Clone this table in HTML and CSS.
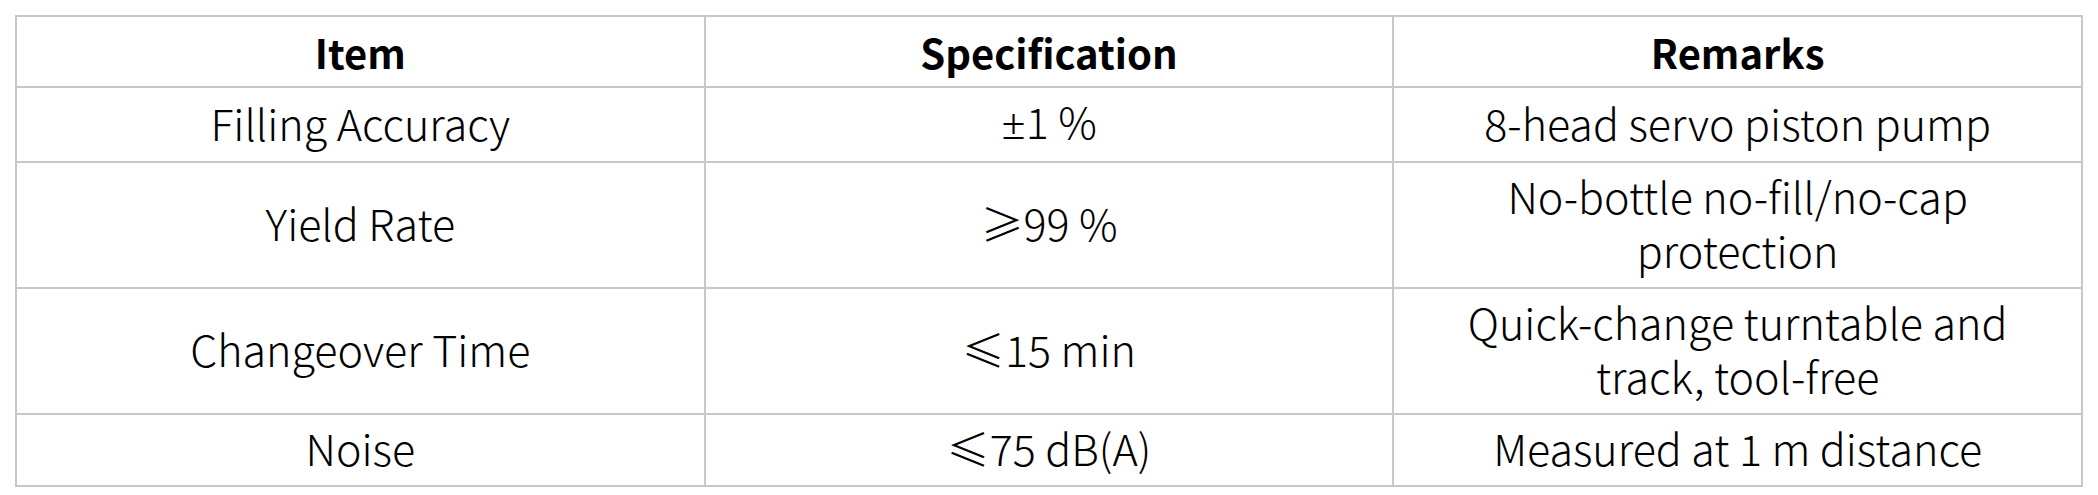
FILE: index.html
```html
<!DOCTYPE html>
<html lang="en">
<head>
<meta charset="utf-8">
<title>Specifications</title>
<link rel="stylesheet" href="styles.css">
</head>
<body>
<table class="spec-table">
  <thead>
    <tr>
      <th>Item</th>
      <th>Specification</th>
      <th>Remarks</th>
    </tr>
  </thead>
  <tbody>
    <tr>
      <td>Filling Accuracy</td>
      <td><span class="latin">±</span>1 %</td>
      <td>8-head servo piston pump</td>
    </tr>
    <tr>
      <td>Yield Rate</td>
      <td>≥99 %</td>
      <td>No-bottle no-fill/no-cap protection</td>
    </tr>
    <tr>
      <td>Changeover Time</td>
      <td>≤15 min</td>
      <td>Quick-change turntable and track, tool-free</td>
    </tr>
    <tr>
      <td>Noise</td>
      <td>≤75 dB(A)</td>
      <td>Measured at 1 m distance</td>
    </tr>
  </tbody>
</table>
</body>
</html>
```

FILE: styles.css
```css
html, body {
  margin: 0;
  background: #ffffff;
}

body {
  padding: 15px 15px;
  font-family: "Noto Sans CJK SC", "Noto Sans", sans-serif;
  color: #000000;
}

.spec-table {
  width: 100%;
  border-collapse: collapse;
  table-layout: fixed;
}

.spec-table th,
.spec-table td {
  border: 2px solid #c8c8c8;
  line-height: 54px;
  text-align: center;
  vertical-align: middle;
}

.spec-table th {
  padding: 8px 40px 7px;
  font-size: 40px;
  font-weight: 700;
}

.spec-table td {
  padding: 5px 40px 11px;
  font-size: 43px;
  font-weight: 300;
}

.latin {
  font-family: "Noto Sans", sans-serif;
}
```
